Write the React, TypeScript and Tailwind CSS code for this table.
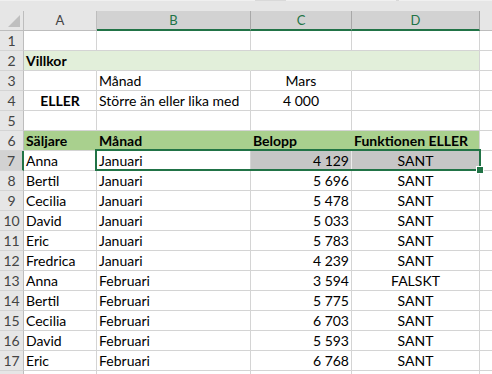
import React from 'react';

type Cell = { t?: string; b?: boolean; a?: 'l' | 'c' | 'r' };

const GRID = 'grid grid-cols-[24px_73px_154px_101px_128px_1fr]';

const data: [string, string, string, string][] = [
  ['Anna', 'Januari', '4 129', 'SANT'],
  ['Bertil', 'Januari', '5 696', 'SANT'],
  ['Cecilia', 'Januari', '5 478', 'SANT'],
  ['David', 'Januari', '5 033', 'SANT'],
  ['Eric', 'Januari', '5 783', 'SANT'],
  ['Fredrica', 'Januari', '4 239', 'SANT'],
  ['Anna', 'Februari', '3 594', 'FALSKT'],
  ['Bertil', 'Februari', '5 775', 'SANT'],
  ['Cecilia', 'Februari', '6 703', 'SANT'],
  ['David', 'Februari', '5 593', 'SANT'],
  ['Eric', 'Februari', '6 768', 'SANT'],
];

// rows 1..18, cols A..D
const rows: { cells: Cell[]; fill?: string }[] = [
  { cells: [{}, {}, {}, {}] },
  { cells: [{ t: 'Villkor', b: true }, {}, {}, {}], fill: 'light' },
  { cells: [{}, { t: 'Månad' }, { t: 'Mars', a: 'c' }, {}] },
  { cells: [{ t: 'ELLER', b: true, a: 'c' }, { t: 'Större än eller lika med' }, { t: '4 000', a: 'c' }, {}] },
  { cells: [{}, {}, {}, {}] },
  {
    cells: [
      { t: 'Säljare', b: true },
      { t: 'Månad', b: true },
      { t: 'Belopp', b: true },
      { t: 'Funktionen ELLER', b: true },
    ],
    fill: 'dark',
  },
  ...data.map(([a, b, c, d]) => ({
    cells: [{ t: a }, { t: b }, { t: c, a: 'r' as const }, { t: d, a: 'c' as const }],
  })),
  { cells: [{}, {}, {}, {}] },
];

const alignCls = (a?: string) =>
  a === 'c' ? 'justify-center' : a === 'r' ? 'justify-end pr-[2px]' : 'justify-start pl-[2px]';

export default function App() {
  return (
    <div
      className="relative w-[492px] h-[374px] overflow-hidden bg-white text-black"
      style={{ fontFamily: 'Lato, "Liberation Sans", sans-serif' }}
    >
      {/* strip above the column headers */}
      <div className="h-[11px] bg-[#e6e6e6] relative">
        <div className="flex h-px bg-[#d9d9d9]">
          <div className="w-[255px] bg-[#f0f0f0]" />
          <div className="w-[31px]" />
          <div className="w-[110px] bg-[#f0f0f0]" />
          <div className="w-[3px]" />
          <div className="flex-1 bg-[#f0f0f0]" />
        </div>
      </div>

      {/* column headers */}
      <div className={GRID}>
        <div className="relative h-[20px] bg-[#e6e6e6] border-r border-b border-[#bdbdbd]">
          <svg width="13" height="13" className="absolute left-[8px] top-[4px]">
            <polygon points="12,0 12,12 0,12" fill="#bfbfbf" />
          </svg>
        </div>
        <div className="h-[20px] bg-[#e6e6e6] border-r border-b border-[#bdbdbd] flex items-center justify-center text-[13px] text-[#444]">
          A
        </div>
        {['B', 'C', 'D'].map((l) => (
          <div
            key={l}
            className="h-[20px] bg-[#d2d2d2] border-r border-r-[#a8a8a8] border-b-2 border-b-[#217346] flex items-center justify-center pt-[1px] text-[13px] text-[#217346]"
          >
            {l}
          </div>
        ))}
        <div className="h-[20px] bg-[#e6e6e6] border-b border-[#bdbdbd]" />
      </div>

      {/* sheet rows */}
      <div className={GRID + ' text-[14px]'}>
        {rows.map((row, i) => {
          const n = i + 1;
          const sel = n === 7;
          const fillBg = row.fill === 'light' ? 'bg-[#e2efda]' : row.fill === 'dark' ? 'bg-[#a9d08e]' : '';
          return (
            <React.Fragment key={n}>
              <div
                className={`h-[20px] flex items-center justify-center leading-[19px] border-b border-b-[#d4d4d4] ${
                  sel
                    ? 'bg-[#d2d2d2] border-r-2 border-r-[#217346] text-[#444]'
                    : 'bg-[#e6e6e6] border-r border-r-[#bdbdbd] text-[#444]'
                }`}
              >
                {n < 18 ? n : ''}
              </div>
              {row.cells.map((c, j) => {
                const shaded = sel && j >= 2;
                let cls = 'h-[20px] flex items-center leading-[19px] whitespace-nowrap overflow-visible border-b border-b-[#d4d4d4] border-r ';
                if (row.fill) cls += fillBg + (j < 3 ? ' border-r-transparent' : ' border-r-[#d4d4d4]');
                else if (shaded) cls += 'bg-[#c6c6c6] ' + (j === 2 ? 'border-r-[#ededed]' : 'border-r-[#d4d4d4]');
                else cls += 'border-r-[#d4d4d4]';
                return (
                  <div key={j} className={`${cls} ${alignCls(c.a)} ${c.b ? 'font-bold' : ''}`}>
                    {c.t}
                  </div>
                );
              })}
              <div className="h-[20px] border-b border-b-[#d4d4d4]" />
            </React.Fragment>
          );
        })}
      </div>

      {/* selection B7:D7 */}
      <div className="absolute left-[95px] top-[149px] w-[386px] h-[22px] border-2 border-[#217346] pointer-events-none" />
      <div className="absolute left-[476px] top-[166px] w-[8px] h-[8px] bg-[#217346] border border-white" />
    </div>
  );
}
